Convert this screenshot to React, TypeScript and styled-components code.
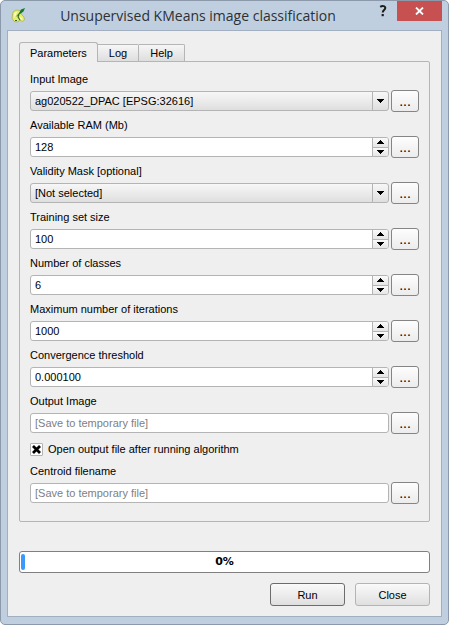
import React, { useId, useState } from "react";
import styled, { createGlobalStyle, css } from "styled-components";

const GlobalStyle = createGlobalStyle`
  * { box-sizing: border-box; }
  body {
    margin: 0;
    background: #fff;
    color: #000;
    font: 11px/14px "Liberation Sans", Arial, sans-serif;
  }
  button, input, select { font: inherit; color: inherit; margin: 0; }
`;

const Window = styled.main`
  display: flex;
  flex-direction: column;
  min-height: 100vh;
  padding: 0 6px 7px;
  background: #c0cfdf;
  border: 1px solid #8b99ab;
  border-radius: 5px;
`;

const TitleBar = styled.header`
  display: flex;
  align-items: flex-start;
  height: 29px;
  padding-left: 4px;
`;

const AppIcon = styled.svg`
  flex: none;
  width: 16px;
  height: 16px;
  margin-top: 6px;
`;

const Title = styled.h1`
  flex: 1;
  margin: 0;
  padding-top: 5px;
  text-align: center;
  white-space: nowrap;
  color: #2c3136;
  font: 14px/20px "Open Sans", "Noto Sans", sans-serif;
`;

const TitleButton = styled.button<{ $close?: boolean }>`
  flex: none;
  display: flex;
  align-items: center;
  justify-content: center;
  width: ${(p) => (p.$close ? 45 : 28)}px;
  height: 20px;
  padding: 0;
  border: 0;
  background: ${(p) => (p.$close ? "#c75050" : "transparent")};
`;

const Client = styled.div`
  flex: 1;
  display: flex;
  flex-direction: column;
  padding: 11px 11px 10px;
  background: #efefef;
  border: 1px solid #a1afc0;
`;

const Tabs = styled.div`
  display: flex;
  align-items: flex-end;
  height: 19px;
`;

const Tab = styled.button<{ $active?: boolean }>`
  position: relative;
  height: 17px;
  padding: 0 11px;
  border: 1px solid #b5b5b5;
  border-left-width: 0;
  border-bottom: 0;
  border-radius: 0 2px 0 0;
  background: linear-gradient(#f6f6f6, #dedede);
  ${(p) =>
    p.$active &&
    css`
      z-index: 1;
      height: 20px;
      margin-bottom: -1px;
      padding: 0 10px;
      border-left-width: 1px;
      border-radius: 3px 3px 0 0;
      background: #efefef;
    `}
`;

const Panel = styled.section`
  display: flex;
  flex-direction: column;
  gap: 6px;
  padding: 10px 10px 17px;
  border: 1px solid #b5b5b5;
  border-radius: 0 2px 2px 2px;
`;

const Field = styled.div`
  display: flex;
  flex-direction: column;
  gap: 4px;
`;

const Row = styled.div`
  display: flex;
  align-items: center;
  gap: 2px;
`;

const inputFrame = css`
  display: flex;
  flex: 1;
  min-width: 0;
  height: 20px;
  border: 1px solid #b4b4b4;
  border-radius: 3px;
  overflow: hidden;
`;

const TextFrame = styled.div`
  ${inputFrame}
  background: #fff;
`;

const SelectFrame = styled.div`
  ${inputFrame}
  position: relative;
  background: linear-gradient(#f7f7f7, #dfdfdf);
`;

const TextInput = styled.input`
  flex: 1;
  min-width: 0;
  padding: 0 4px;
  border: 0;
  outline: 0;
  background: transparent;
  &::placeholder { color: #808080; opacity: 1; }
`;

const Select = styled.select`
  width: 100%;
  padding: 0 20px 0 4px;
  border: 0;
  outline: 0;
  appearance: none;
  background: transparent;
`;

const SelectArrow = styled.span`
  position: absolute;
  top: 0;
  right: 0;
  bottom: 0;
  display: flex;
  align-items: center;
  justify-content: center;
  width: 16px;
  border-left: 1px solid #b4b4b4;
  pointer-events: none;
`;

const Stepper = styled.div`
  display: flex;
  flex-direction: column;
  width: 16px;
  border-left: 1px solid #b4b4b4;
`;

const StepButton = styled.button`
  flex: 1;
  display: flex;
  align-items: center;
  justify-content: center;
  padding: 0;
  border: 0;
  background: linear-gradient(#fafafa, #e6e6e6);
  & + & { border-top: 1px solid #b4b4b4; }
`;

const BrowseButton = styled.button`
  flex: none;
  display: flex;
  align-items: center;
  justify-content: center;
  width: 28px;
  height: 22px;
  padding: 0;
  border: 1px solid #858585;
  border-radius: 3px;
  background: linear-gradient(#fdfdfd, #ececec);
  font-size: 14px;
`;

const CheckRow = styled.label`
  display: flex;
  align-items: center;
  gap: 5px;
  height: 18px;
`;

const CheckBox = styled.span`
  display: grid;
  width: 13px;
  height: 13px;
  & > * { grid-area: 1 / 1; }
  svg { pointer-events: none; }
  input:not(:checked) + svg { visibility: hidden; }
`;

const CheckInput = styled.input`
  appearance: none;
  width: 13px;
  height: 13px;
  border: 1px solid #b4b4b4;
  border-radius: 1px;
  background: #fff;
`;

const Footer = styled.footer`
  display: flex;
  flex-direction: column;
  gap: 10px;
  margin-top: auto;
  padding-top: 29px;
`;

const Progress = styled.div`
  display: grid;
  align-items: center;
  height: 22px;
  padding: 1px;
  border: 1px solid #808080;
  border-radius: 3px;
  background: #fff;
  text-align: center;
  font-weight: bold;
  & > * { grid-area: 1 / 1; }
`;

const ProgressText = styled.span`
  font-family: "DejaVu Sans", sans-serif;
`;

const ProgressFill = styled.span`
  width: 4px;
  height: 16px;
  border-radius: 2px;
  background: #3b99fc;
`;

const Actions = styled.div`
  display: flex;
  justify-content: flex-end;
  gap: 10px;
`;

const ActionButton = styled.button<{ $primary?: boolean }>`
  width: 75px;
  height: 23px;
  padding: 0;
  border: 1px solid ${(p) => (p.$primary ? "#6c6c6c" : "#b4b4b4")};
  border-radius: 3px;
  background: linear-gradient(#fafafa, #dfdfdf);
`;

function Arrow({ up }: { up?: boolean }) {
  return (
    <svg width="7" height="4" viewBox="0 0 7 4" shapeRendering="crispEdges" aria-hidden="true">
      <path d={up ? "M3 0h1v1h1v1h1v1h1v1H0V3h1V2h1V1h1z" : "M0 0h7v1H6v1H5v1H4v1H3V3H2V2H1V1H0z"} />
    </svg>
  );
}

type FieldProps = { label: string; value?: string; placeholder?: string };

function Browse({ label }: { label: string }) {
  return <BrowseButton type="button" aria-label={`Browse ${label}`}>...</BrowseButton>;
}

function SelectField({ label, value }: FieldProps) {
  const id = useId();
  return (
    <Field>
      <label htmlFor={id}>{label}</label>
      <Row>
        <SelectFrame>
          <Select id={id} defaultValue={value}>
            <option>{value}</option>
          </Select>
          <SelectArrow><Arrow /></SelectArrow>
        </SelectFrame>
        <Browse label={label} />
      </Row>
    </Field>
  );
}

function NumberField({ label, value = "0" }: FieldProps) {
  const id = useId();
  const [text, setText] = useState(value);
  const decimals = (value.split(".")[1] || "").length;
  const step = (direction: number) =>
    setText((Number(text) + direction * 10 ** -decimals).toFixed(decimals));
  return (
    <Field>
      <label htmlFor={id}>{label}</label>
      <Row>
        <TextFrame>
          <TextInput id={id} inputMode="decimal" value={text} onChange={(e) => setText(e.target.value)} />
          <Stepper>
            <StepButton type="button" aria-label={`Increase ${label}`} onClick={() => step(1)}><Arrow up /></StepButton>
            <StepButton type="button" aria-label={`Decrease ${label}`} onClick={() => step(-1)}><Arrow /></StepButton>
          </Stepper>
        </TextFrame>
        <Browse label={label} />
      </Row>
    </Field>
  );
}

function FileField({ label, placeholder }: FieldProps) {
  const id = useId();
  return (
    <Field>
      <label htmlFor={id}>{label}</label>
      <Row>
        <TextFrame><TextInput id={id} placeholder={placeholder} /></TextFrame>
        <Browse label={label} />
      </Row>
    </Field>
  );
}

export default function App() {
  return (
    <>
      <GlobalStyle />
      <Window>
        <TitleBar>
          <AppIcon viewBox="0 0 16 16" aria-hidden="true">
            <path d="M2 5 5 3l4 .5L11 8l2 2 .5 3-2 1.500L8.500 13 7 15l-4-.5L1 11z" fill="#e6ee6c" stroke="#a9b455" strokeWidth=".8" />
            <path d="M3 6.500 6 4.500 5 8l-1.500 3zM9 10l2.500 1-.5 2-2-1z" fill="#fafbc0" />
            <path d="M4.500 10 8 6l2-3.500L14 1l-1.500 3.500L9 7z" fill="#137a2b" />
            <path d="M8 7.500 7 10l2 3M4 13.500h2" fill="none" stroke="#3d6526" strokeWidth="1.200" />
          </AppIcon>
          <Title>Unsupervised KMeans image classification</Title>
          <TitleButton type="button" aria-label="Help">
            <svg width="8" height="12" viewBox="0 0 8 12" aria-hidden="true">
              <path d="M1.200 1.800C3 .7 6.300.7 6.300 3c0 2-2.600 2-2.600 4.600" fill="none" stroke="#1c1c1c" strokeWidth="2" />
              <path d="M2.600 9h2.200v2.200H2.600z" fill="#1c1c1c" />
            </svg>
          </TitleButton>
          <TitleButton type="button" aria-label="Close window" $close>
            <svg width="9" height="8" viewBox="0 0 9 8" aria-hidden="true">
              <path d="m1 .5 7 7m0-7-7 7" stroke="#fff" strokeWidth="1.800" />
            </svg>
          </TitleButton>
        </TitleBar>
        <Client>
          <Tabs role="tablist">
            <Tab type="button" role="tab" aria-selected="true" $active>Parameters</Tab>
            <Tab type="button" role="tab" aria-selected="false">Log</Tab>
            <Tab type="button" role="tab" aria-selected="false">Help</Tab>
          </Tabs>
          <Panel role="tabpanel" aria-label="Parameters">
            <SelectField label="Input Image" value="ag020522_DPAC [EPSG:32616]" />
            <NumberField label="Available RAM (Mb)" value="128" />
            <SelectField label="Validity Mask [optional]" value="[Not selected]" />
            <NumberField label="Training set size" value="100" />
            <NumberField label="Number of classes" value="6" />
            <NumberField label="Maximum number of iterations" value="1000" />
            <NumberField label="Convergence threshold" value="0.000100" />
            <FileField label="Output Image" placeholder="[Save to temporary file]" />
            <CheckRow>
              <CheckBox>
                <CheckInput type="checkbox" defaultChecked />
                <svg width="13" height="13" viewBox="0 0 13 13" aria-hidden="true">
                  <path d="m3 3 7 7m0-7-7 7" stroke="#000" strokeWidth="2.800" />
                </svg>
              </CheckBox>
              Open output file after running algorithm
            </CheckRow>
            <FileField label="Centroid filename" placeholder="[Save to temporary file]" />
          </Panel>
          <Footer>
            <Progress role="progressbar" aria-valuenow={0} aria-valuemin={0} aria-valuemax={100}>
              <ProgressFill />
              <ProgressText>0%</ProgressText>
            </Progress>
            <Actions>
              <ActionButton type="button" $primary>Run</ActionButton>
              <ActionButton type="button">Close</ActionButton>
            </Actions>
          </Footer>
        </Client>
      </Window>
    </>
  );
}
